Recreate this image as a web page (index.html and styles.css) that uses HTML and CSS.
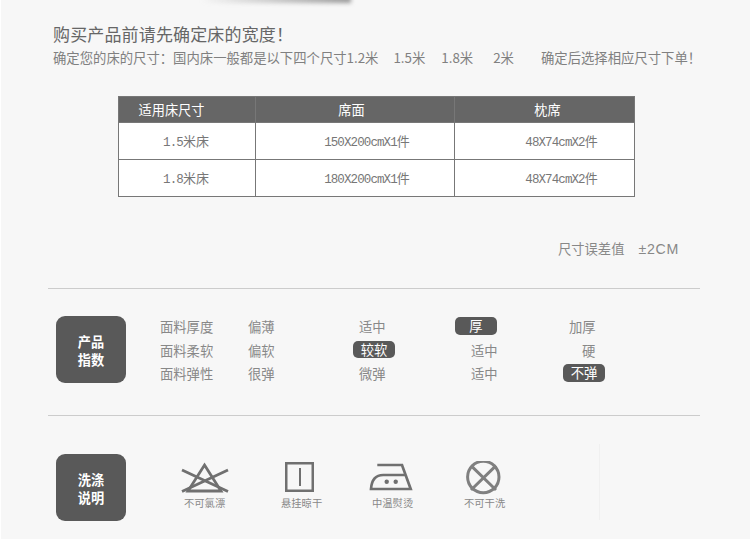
FILE: index.html
```html
<!DOCTYPE html>
<html lang="zh">
<head>
<meta charset="utf-8">
<title>尺寸</title>
<link rel="stylesheet" href="styles.css">
</head>
<body>
<main class="page">
  <div class="shadow"></div>
  <h1 class="title">购买产品前请先确定床的宽度！</h1>
  <p class="lead"><span>确定您的床的尺寸：国内床一般都是以下四个尺寸1.2米</span><span>1.5米</span><span>1.8米</span><span>2米</span><span>确定后选择相应尺寸下单！</span></p>
  <table class="sizes">
    <thead><tr><th class="c1">适用床尺寸</th><th class="c2">席面</th><th class="c3">枕席</th></tr></thead>
    <tbody>
      <tr><td class="c1"><span class="bed">1.5</span>米床</td><td class="c2"><span class="num">150X200cmX1</span>件</td><td class="c3"><span class="num">48X74cmX2</span>件</td></tr>
      <tr><td class="c1"><span class="bed">1.8</span>米床</td><td class="c2"><span class="num">180X200cmX1</span>件</td><td class="c3"><span class="num">48X74cmX2</span>件</td></tr>
    </tbody>
  </table>
  <p class="tolerance">尺寸误差值<span class="err">±2CM</span></p>
  <section class="block index">
    <div class="badge">产品<br>指数</div>
    <div class="grid">
      <span class="k">面料厚度</span><span>偏薄</span><span>适中</span><span><b class="far">厚</b></span><span>加厚</span>
      <span class="k">面料柔软</span><span>偏软</span><span><b>较软</b></span><span>适中</span><span class="hard">硬</span>
      <span class="k">面料弹性</span><span>很弹</span><span>微弹</span><span>适中</span><span><b>不弹</b></span>
    </div>
  </section>
  <section class="block wash">
    <div class="badge">洗涤<br>说明</div>
    <div class="icons">
      <figure class="care">
        <svg width="50" height="34" viewBox="0 0 50 34"><path d="M24.5 4 L41 30 H8 Z" fill="none" stroke="#707070" stroke-width="2.8"/><path d="M2 9 L48 30.5 M2 30.5 L48 9" stroke="#707070" stroke-width="2.8"/></svg>
        <figcaption>不可氯漂</figcaption>
      </figure>
      <figure class="care">
        <svg width="50" height="34" viewBox="0 0 50 34"><rect x="9.25" y="2.25" width="26.5" height="27.5" fill="none" stroke="#707070" stroke-width="2.5"/><path d="M23 7 V25" stroke="#707070" stroke-width="2"/></svg>
        <figcaption>悬挂晾干</figcaption>
      </figure>
      <figure class="care">
        <svg width="50" height="34" viewBox="0 0 50 34"><path d="M9.3 4 H34 L42.7 28 H3 C3.5 20 7 14 15.3 14 H38" fill="none" stroke="#707070" stroke-width="2.7"/><circle cx="18.7" cy="20.7" r="2.2" fill="#707070"/><circle cx="27.7" cy="20.7" r="2.2" fill="#707070"/></svg>
        <figcaption>中温熨烫</figcaption>
      </figure>
      <figure class="care">
        <svg width="50" height="34" viewBox="0 0 50 34"><circle cx="23.3" cy="16" r="15.7" fill="none" stroke="#808080" stroke-width="3"/><path d="M11 4.7 L36 29 M36 4.7 L11 29" stroke="#808080" stroke-width="3"/></svg>
        <figcaption>不可干洗</figcaption>
      </figure>
    </div>
  </section>
</main>
</body>
</html>
```
FILE: styles.css
```css
* { box-sizing: border-box; }
html, body { margin: 0; background: #fff; }
body { font-family: "Noto Sans CJK SC", "Liberation Sans", sans-serif; color: #777; }
.page { position: relative; width: 750px; height: 539px; padding: 22px 50px 0 52px; border-left: 1px solid #fff; background: #f7f7f7; overflow: hidden; }
.shadow { position: absolute; top: -4px; left: 200px; width: 150px; height: 7px; background: linear-gradient(to right, rgba(150,150,150,0), #999); filter: blur(2px); }
.title { margin: 0; font-size: 17px; line-height: 24px; font-weight: 400; letter-spacing: .15px; color: #666; }
.lead { margin: 1px 0 0; display: flex; font-size: 13.35px; line-height: 22px; color: #808080; white-space: nowrap; }
.lead span:nth-child(2) { margin-left: 15px; }
.lead span:nth-child(3) { margin-left: 16px; }
.lead span:nth-child(4) { margin-left: 20px; }
.lead span:nth-child(5) { margin-left: 27px; }
.sizes { margin: 27px 0 0 65px; width: 517px; border-collapse: collapse; table-layout: fixed; background: #fff; font-size: 13px; color: #777; }
.sizes th, .sizes td { border: 1px solid #777; padding: 0; text-align: center; font-weight: 400; }
.sizes th { height: 26px; background: #666; color: #fff; font-size: 13.2px; }
.sizes td { height: 37px; padding-bottom: 2px; }
.sizes th.c1 { padding-right: 31px; }
.sizes th.c2 { padding-right: 7px; }
.sizes th.c3 { padding-left: 6px; }
.sizes td.c1 { padding-right: 2px; }
.sizes td.c2 { padding-left: 24px; }
.sizes td.c3 { padding-left: 34px; }
.c1 { width: 137px; }
.c2 { width: 199px; }
.num { font-family: "Liberation Mono", monospace; font-size: 12.5px; letter-spacing: -.9px; }
.bed { font-family: "Liberation Mono", monospace; font-size: 12.5px; letter-spacing: -.8px; }
.tolerance { margin: 42px 21px 0 0; text-align: right; font-size: 13.3px; line-height: 20px; color: #888; }
.err { margin-left: 14px; font-family: "Liberation Sans", sans-serif; font-size: 14.2px; letter-spacing: .7px; }
.block { display: flex; margin-left: -5px; border-top: 1px solid #ccc; }
.index { margin-top: 29px; height: 127px; padding: 27px 0 0 8px; }
.wash { padding: 38px 0 0 8px; }
.badge { flex: none; display: flex; align-items: center; justify-content: center; width: 70px; height: 67px; padding-top: 2px; border-radius: 9px; background: #595959; color: #fff; font-size: 13.2px; line-height: 17.5px; font-weight: 700; text-align: center; }
.grid { display: grid; grid-template-columns: 88px 111px 112px 98px 60px; grid-auto-rows: 23.5px; margin: -1px 0 0 34px; font-size: 13.3px; color: #888; }
.grid span { display: flex; align-items: center; }
.hard { padding-left: 13px; }
.grid b { display: block; flex: none; width: 42px; height: 17.5px; margin: -2px 0 0 -6px; border-radius: 5px; background: #595959; color: #fff; font-weight: 400; line-height: 17.5px; text-align: center; }
.grid b.far { margin-left: -16px; }
.icons { display: grid; grid-template-columns: 97px 91px 92px 60px; flex: none; width: 416px; height: 76px; margin: -10px 0 0 58px; padding-top: 17px; border-right: 1px solid #f0f0f0; }
.care { margin: 0; width: 42px; }
.care svg { display: block; margin-left: -4px; }
.care figcaption { font-size: 10.3px; line-height: 14px; margin-top: 1px; color: #888; white-space: nowrap; }
```
